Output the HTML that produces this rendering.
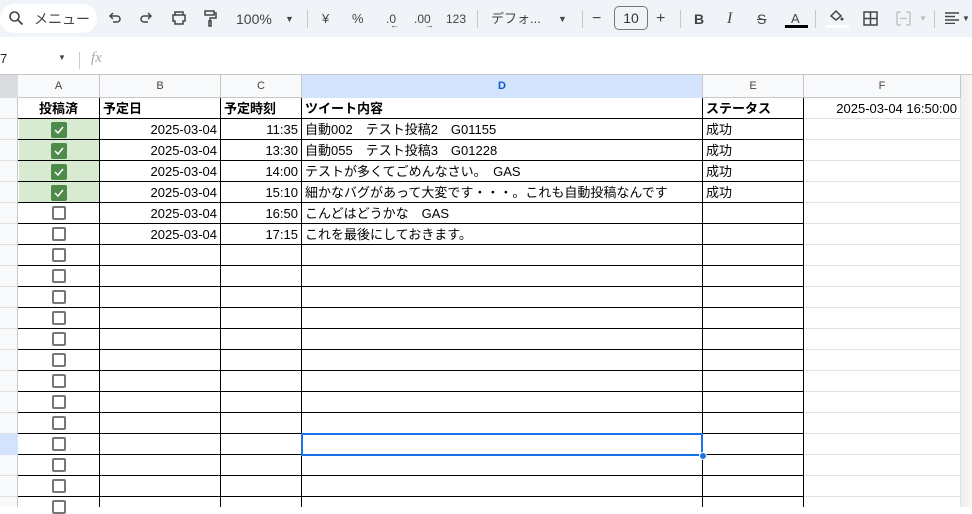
<!DOCTYPE html><html><head><meta charset="utf-8"><style>
*{box-sizing:border-box;margin:0;padding:0}
body{width:972px;height:507px;overflow:hidden;position:relative;background:#fff;font-family:"Liberation Sans","Noto Sans CJK JP",sans-serif;font-size:13px;color:#000}
.a{position:absolute}
.tb{left:0;top:0;width:972px;height:37px;background:#f0f4f9}
.ti{position:absolute;top:9px;font-size:14px;color:#444;line-height:20px}
.sep{position:absolute;top:10px;width:1px;height:18px;background:#c7c7c7}
.t{position:absolute;height:21px;line-height:21px;white-space:nowrap}
.cb{position:absolute;left:52px;width:14px;height:14px;border:2px solid #777;border-radius:2px;background:#fff}
.cc{position:absolute;left:51px;width:16px;height:16px;background:#4e8a4a;border-radius:2px}
.ch{position:absolute;height:23px;line-height:23px;top:75px;text-align:center;font-size:11px;color:#444;border-right:1px solid #c7c7c7}
</style></head><body>
<div class="a tb"></div>
<div class="a" style="left:0;top:4px;width:97px;height:29px;background:#fff;border-radius:15px"></div>
<svg class="a" style="left:8px;top:10px" width="16" height="16" viewBox="0 0 16 16"><circle cx="6.5" cy="6.5" r="4.5" fill="none" stroke="#444" stroke-width="1.6"/><path d="M10 10l4.5 4.5" stroke="#444" stroke-width="1.8"/></svg>
<div class="ti" style="left:34px;color:#444">メニュー</div>
<svg class="a" style="left:108px;top:11px" width="14" height="14" viewBox="0 0 14 14"><path d="M3 5h6a3 3 0 010 6H5M5 2L2 5l3 3" fill="none" stroke="#444" stroke-width="1.5"/></svg>
<svg class="a" style="left:139px;top:11px" width="14" height="14" viewBox="0 0 14 14"><path d="M11 5H5a3 3 0 000 6h4M9 2l3 3-3 3" fill="none" stroke="#444" stroke-width="1.5"/></svg>
<svg class="a" style="left:171px;top:10px" width="16" height="16" viewBox="0 0 16 16"><path d="M4 5V2h8v3M2 5h12v6h-2v3H4v-3H2z" fill="none" stroke="#444" stroke-width="1.5"/></svg>
<svg class="a" style="left:203px;top:9px" width="14" height="18" viewBox="0 0 14 18"><path d="M2 2h9v4H2zM11 4h2v5H7v3M6 12h2v5H6z" fill="none" stroke="#444" stroke-width="1.5"/></svg>
<div class="ti" style="left:236px">100%</div>
<div class="ti" style="left:285px;font-size:9px">▼</div>
<div class="sep" style="left:307px"></div>
<div class="ti" style="left:322px;font-size:13px">¥</div>
<div class="ti" style="left:352px;font-size:13px">%</div>
<div class="ti" style="left:386px;font-size:12px">.0<span style="font-size:9px;position:relative;top:5px;left:-6px">←</span></div>
<div class="ti" style="left:414px;font-size:12px">.00<span style="font-size:9px;position:relative;top:5px;left:-6px">→</span></div>
<div class="ti" style="left:446px;font-size:12px">123</div>
<div class="sep" style="left:477px"></div>
<div class="ti" style="left:491px;font-size:13px">デフォ...</div>
<div class="ti" style="left:558px;font-size:9px">▼</div>
<div class="sep" style="left:582px"></div>
<div class="ti" style="left:592px;font-size:16px">−</div>
<div class="a" style="left:614px;top:6px;width:34px;height:24px;border:1px solid #747775;border-radius:5px;text-align:center;line-height:22px;font-size:14px;color:#333">10</div>
<div class="ti" style="left:656px;font-size:16px">+</div>
<div class="sep" style="left:680px"></div>
<div class="ti" style="left:694px;font-weight:bold">B</div>
<div class="ti" style="left:727px;font-style:italic;font-family:'Liberation Serif',serif;font-size:16px">I</div>
<div class="ti" style="left:757px;text-decoration:line-through">S</div>
<div class="ti" style="left:791px;font-size:13px">A</div>
<div class="a" style="left:785px;top:25px;width:23px;height:3px;background:#000"></div>
<div class="sep" style="left:815px"></div>
<svg class="a" style="left:828px;top:8px" width="16" height="16" viewBox="0 0 16 16"><path d="M3 8l5-5 5 5-5 4z" fill="none" stroke="#444" stroke-width="1.5"/><circle cx="14" cy="11" r="1.5" fill="#444"/></svg>
<div class="a" style="left:826px;top:25px;width:23px;height:3px;background:#fff"></div>
<svg class="a" style="left:863px;top:11px" width="15" height="15" viewBox="0 0 15 15"><path d="M1 1h13v13H1zM7.5 1v13M1 7.5h13" fill="none" stroke="#444" stroke-width="1.5"/></svg>
<svg class="a" style="left:896px;top:11px" width="15" height="15" viewBox="0 0 15 15"><path d="M1 1h4M10 1h4M1 14h4M10 14h4M1 1v13M14 1v13M4 7.5h7" fill="none" stroke="#bbb" stroke-width="1.3"/></svg>
<div class="ti" style="left:919px;font-size:8px;color:#bbb">▼</div>
<div class="sep" style="left:934px"></div>
<svg class="a" style="left:945px;top:12px" width="14" height="12" viewBox="0 0 14 12"><path d="M0 1h14M0 4.5h10M0 8h14M0 11.5h10" stroke="#444" stroke-width="1.4"/></svg>
<div class="ti" style="left:962px;font-size:8px">▼</div>

<!-- formula bar -->
<div class="a" style="left:0;top:51px;font-size:13px;color:#222">7</div>
<div class="a" style="left:58px;top:53px;font-size:8px;color:#444">▼</div>
<div class="a" style="left:79px;top:52px;width:1px;height:17px;background:#ccc"></div>
<div class="a" style="left:91px;top:50px;font-style:italic;font-family:'Liberation Serif',serif;font-size:15px;color:#aaa">fx</div>

<!-- column header -->
<div class="a" style="left:0;top:74px;width:972px;height:1px;background:#c7c7c7"></div>
<div class="a" style="left:0;top:75px;width:972px;height:23px;background:#f8f9fa;border-bottom:1px solid #c7c7c7"></div>
<div class="a" style="left:0;top:75px;width:18px;height:23px;background:#dadce0"></div>
<div class="ch" style="left:18px;width:82px">A</div>
<div class="ch" style="left:100px;width:121px">B</div>
<div class="ch" style="left:221px;width:81px">C</div>
<div class="ch" style="left:302px;width:401px;background:#d3e3fd;color:#0b57d0;font-weight:bold">D</div>
<div class="ch" style="left:703px;width:101px">E</div>
<div class="ch" style="left:804px;width:157px">F</div>

<!-- row headers -->
<div class="a" style="left:0;top:98px;width:18px;height:409px;background:#f8f9fa;border-right:1px solid #c7c7c7;background-image:repeating-linear-gradient(to bottom,transparent 0 20px,#e0e0e0 20px 21px)"></div>
<div class="a" style="left:0;top:434px;width:18px;height:21px;background:#d3e3fd"></div>

<!-- grid -->
<div class="a" style="left:803px;top:98px;width:157px;height:409px;background-image:repeating-linear-gradient(to bottom,transparent 0 20px,#e2e2e2 20px 21px)"></div>
<div class="a" style="left:960px;top:98px;width:1px;height:409px;background:#e2e2e2"></div>
<div class="a" style="left:961px;top:75px;width:11px;height:432px;background:linear-gradient(to right,#eee,#f8f8f8)"></div>
<!-- green fills -->
<div class="a" style="left:19px;top:119px;width:80px;height:84px;background:#d9ead3"></div>
<div class="a" style="left:18px;top:98px;width:785px;height:409px;background-image:repeating-linear-gradient(to bottom,transparent 0 20px,#000 20px 21px)"></div>
<div class="a" style="left:99px;top:98px;width:1px;height:409px;background:#000"></div>
<div class="a" style="left:220px;top:98px;width:1px;height:409px;background:#000"></div>
<div class="a" style="left:301px;top:98px;width:1px;height:409px;background:#000"></div>
<div class="a" style="left:702px;top:98px;width:1px;height:409px;background:#000"></div>
<div class="a" style="left:803px;top:98px;width:1px;height:409px;background:#000"></div>

<!-- header texts -->
<div class="t" style="left:18px;top:98px;width:81px;text-align:center;font-weight:bold">投稿済</div>
<div class="t" style="left:103px;top:98px;font-weight:bold">予定日</div>
<div class="t" style="left:224px;top:98px;font-weight:bold">予定時刻</div>
<div class="t" style="left:305px;top:98px;font-weight:bold">ツイート内容</div>
<div class="t" style="left:706px;top:98px;font-weight:bold">ステータス</div>
<div class="t" style="left:804px;top:98px;width:153px;text-align:right">2025-03-04 16:50:00</div>

<!-- checkboxes -->
<div class="cc" style="top:122px"></div><div class="cc" style="top:143px"></div><div class="cc" style="top:164px"></div><div class="cc" style="top:185px"></div>
<svg class="a" style="left:51px;top:122px" width="16" height="80" viewBox="0 0 16 80"><g fill="none" stroke="#fff" stroke-width="1.5"><path d="M4 8l3 3 5-6"/><path d="M4 29l3 3 5-6"/><path d="M4 50l3 3 5-6"/><path d="M4 71l3 3 5-6"/></g></svg>
<div class="cb" style="top:206px"></div><div class="cb" style="top:227px"></div><div class="cb" style="top:248px"></div><div class="cb" style="top:269px"></div><div class="cb" style="top:290px"></div><div class="cb" style="top:311px"></div><div class="cb" style="top:332px"></div><div class="cb" style="top:353px"></div><div class="cb" style="top:374px"></div><div class="cb" style="top:395px"></div><div class="cb" style="top:416px"></div><div class="cb" style="top:437px"></div><div class="cb" style="top:458px"></div><div class="cb" style="top:479px"></div><div class="cb" style="top:500px"></div>

<!-- data -->
<div class="t" style="left:100px;top:119px;width:117px;text-align:right">2025-03-04</div>
<div class="t" style="left:100px;top:140px;width:117px;text-align:right">2025-03-04</div>
<div class="t" style="left:100px;top:161px;width:117px;text-align:right">2025-03-04</div>
<div class="t" style="left:100px;top:182px;width:117px;text-align:right">2025-03-04</div>
<div class="t" style="left:100px;top:203px;width:117px;text-align:right">2025-03-04</div>
<div class="t" style="left:100px;top:224px;width:117px;text-align:right">2025-03-04</div>
<div class="t" style="left:221px;top:119px;width:77px;text-align:right">11:35</div>
<div class="t" style="left:221px;top:140px;width:77px;text-align:right">13:30</div>
<div class="t" style="left:221px;top:161px;width:77px;text-align:right">14:00</div>
<div class="t" style="left:221px;top:182px;width:77px;text-align:right">15:10</div>
<div class="t" style="left:221px;top:203px;width:77px;text-align:right">16:50</div>
<div class="t" style="left:221px;top:224px;width:77px;text-align:right">17:15</div>
<div class="t" style="left:305px;top:119px">自動002　テスト投稿2　G01155</div>
<div class="t" style="left:305px;top:140px">自動055　テスト投稿3　G01228</div>
<div class="t" style="left:305px;top:161px">テストが多くてごめんなさい。　GAS</div>
<div class="t" style="left:305px;top:182px">細かなバグがあって大変です・・・。これも自動投稿なんです</div>
<div class="t" style="left:305px;top:203px">こんどはどうかな　GAS</div>
<div class="t" style="left:305px;top:224px">これを最後にしておきます。</div>
<div class="t" style="left:706px;top:119px">成功</div>
<div class="t" style="left:706px;top:140px">成功</div>
<div class="t" style="left:706px;top:161px">成功</div>
<div class="t" style="left:706px;top:182px">成功</div>

<!-- selection -->
<div class="a" style="left:301px;top:433px;width:402px;height:23px;border:2px solid #1a73e8"></div>
<div class="a" style="left:699px;top:452px;width:8px;height:8px;border-radius:50%;background:#1a73e8;border:1px solid #fff"></div>
</body></html>
